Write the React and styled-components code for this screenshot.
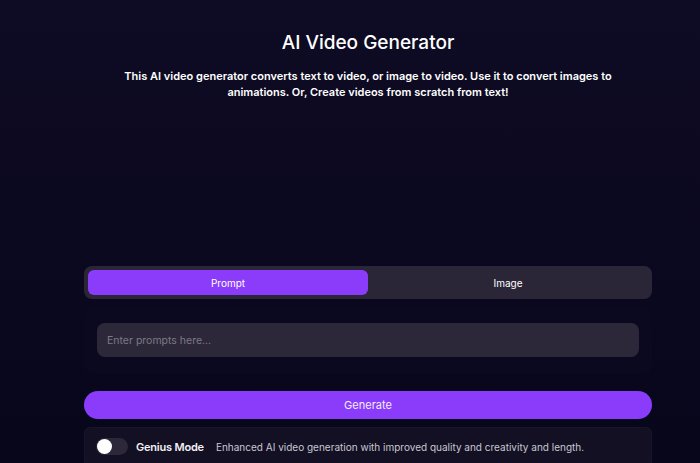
import React, { useState } from "react";
import styled, { createGlobalStyle } from "styled-components";

const GlobalStyle = createGlobalStyle`
  html, body {
    margin: 0;
    padding: 0;
    background: #0a0720;
  }
  body {
    font-family: Inter, "Noto Sans", sans-serif;
    color: #ffffff;
  }
  * { box-sizing: border-box; }
`;

const Page = styled.div`
  min-height: 463px;
  background: linear-gradient(180deg, #0e0b24 0%, #08061b 100%);
  padding: 31px 0 0 36px;
`;

const Hero = styled.header`
  display: flex;
  flex-direction: column;
  align-items: center;
  text-align: center;
`;

const Title = styled.h1`
  margin: 0;
  font-size: 19px;
  line-height: 24px;
  font-weight: 500;
`;

const Lead = styled.p`
  margin: 13px 0 0;
  width: 490px;
  font-size: 11px;
  line-height: 16px;
  font-weight: 600;
`;

const Main = styled.main`
  width: 568px;
  margin: 166px auto 0;
  display: flex;
  flex-direction: column;
`;

const TabList = styled.div`
  display: grid;
  grid-template-columns: 1fr 1fr;
  padding: 4px;
  background: #2a2638;
  border-radius: 8px;
`;

const Tab = styled.button`
  height: 25px;
  border: none;
  border-radius: 6px;
  font-family: inherit;
  font-size: 10px;
  color: #ffffff;
  background: ${(p) => (p.$active ? "#8b3cfb" : "transparent")};
  cursor: pointer;
`;

const PromptPanel = styled.div`
  margin-top: 8px;
  padding: 16px 13px;
  background: #0b0920;
  border-radius: 8px;
`;

const PromptInput = styled.input`
  width: 100%;
  height: 34px;
  border: none;
  outline: none;
  border-radius: 8px;
  background: #2c2839;
  padding: 0 10px;
  font-family: inherit;
  font-size: 10.5px;
  color: #ffffff;
  &::placeholder {
    color: #7c7987;
  }
`;

const GenerateButton = styled.button`
  margin-top: 18px;
  height: 28px;
  border: none;
  border-radius: 14px;
  background: #8b3cfb;
  color: #f3ecff;
  font-family: inherit;
  font-size: 11px;
  cursor: pointer;
`;

const ModeRow = styled.div`
  margin-top: 8px;
  display: flex;
  align-items: center;
  gap: 8px;
  height: 38px;
  padding: 0 11px;
  background: #121022;
  border: 1px solid #17152a;
  border-bottom: none;
  border-radius: 6px 6px 0 0;
`;

const Switch = styled.button`
  position: relative;
  width: 32px;
  height: 17px;
  border: none;
  padding: 0;
  border-radius: 9px;
  background: #2c2839;
  cursor: pointer;
  &::after {
    content: "";
    position: absolute;
    top: 1px;
    left: ${(p) => (p.$on ? "16px" : "1px")};
    width: 15px;
    height: 15px;
    border-radius: 50%;
    background: #ffffff;
  }
`;

const ModeName = styled.span`
  font-size: 11px;
  font-weight: 600;
  letter-spacing: -0.2px;
  color: #f2f1f6;
  margin-right: 4px;
`;

const ModeText = styled.span`
  font-size: 10px;
  color: #c9c7d2;
`;

export default function App() {
  const [tab, setTab] = useState("prompt");
  const [genius, setGenius] = useState(false);

  return (
    <Page>
      <GlobalStyle />
      <Hero>
        <Title>AI Video Generator</Title>
        <Lead>
          This AI video generator converts text to video, or image to video. Use it to convert images to
          animations. Or, Create videos from scratch from text!
        </Lead>
      </Hero>
      <Main>
        <TabList>
          <Tab $active={tab === "prompt"} onClick={() => setTab("prompt")}>Prompt</Tab>
          <Tab $active={tab === "image"} onClick={() => setTab("image")}>Image</Tab>
        </TabList>
        <PromptPanel>
          <PromptInput placeholder="Enter prompts here..." />
        </PromptPanel>
        <GenerateButton>Generate</GenerateButton>
        <ModeRow>
          <Switch $on={genius} onClick={() => setGenius(!genius)} />
          <ModeName>Genius Mode</ModeName>
          <ModeText>Enhanced AI video generation with improved quality and creativity and length.</ModeText>
        </ModeRow>
      </Main>
    </Page>
  );
}
